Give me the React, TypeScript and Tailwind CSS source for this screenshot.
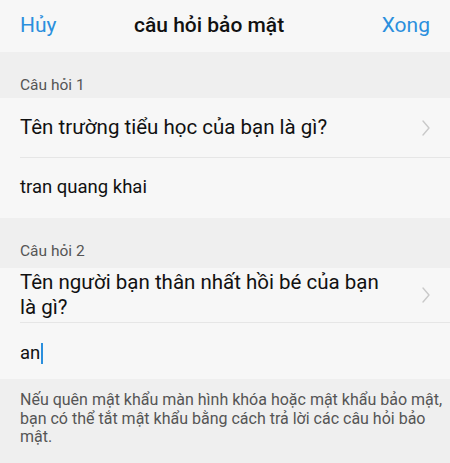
const font = { fontFamily: 'Roboto, "Noto Sans", sans-serif' };

function Chevron() {
  return (
    <svg width="10" height="18" viewBox="0 0 10 18" fill="none" className="shrink-0">
      <path d="M2 2l6 7-6 7" stroke="#c9c9c9" strokeWidth="1.4" strokeLinecap="round" strokeLinejoin="round" />
    </svg>
  );
}

export default function App() {
  return (
    <div className="w-[450px] h-[463px] overflow-hidden bg-[#efefef] text-[#111]" style={font}>
      {/* Header */}
      <div className="h-[52px] bg-[#f7f7f7] flex items-center justify-between px-5">
        <span className="text-[21px] text-[#2b8fdd]">Hủy</span>
        <span className="text-[21px] font-medium text-[#111] mr-[20px]">câu hỏi bảo mật</span>
        <span className="text-[21px] text-[#2b8fdd]">Xong</span>
      </div>

      {/* Question 1 */}
      <div className="h-[46px] flex items-end pb-[1px] px-5 text-[15.5px] text-[#555]">Câu hỏi 1</div>
      <div className="bg-[#f7f7f7]">
        <div className="h-[59px] flex items-center justify-between pl-5 pr-[19px]">
          <span className="text-[20.5px]">Tên trường tiểu học của bạn là gì?</span>
          <Chevron />
        </div>
        <div className="ml-5 h-px bg-[#e6e6e6]" />
        <div className="h-[60px] flex items-center px-5 text-[18.5px]">tran quang khai</div>
      </div>

      {/* Question 2 */}
      <div className="h-[50px] flex items-end pb-[5px] px-5 text-[15.5px] text-[#555]">Câu hỏi 2</div>
      <div className="bg-[#f7f7f7]">
        <div className="h-[54px] flex items-center justify-between pl-5 pr-[19px]">
          <span className="text-[20.5px] leading-[25px] pr-10">Tên người bạn thân nhất hồi bé của bạn là gì?</span>
          <Chevron />
        </div>
        <div className="ml-5 h-px bg-[#e6e6e6]" />
        <div className="h-[56px] flex items-center pt-[5px] px-5 text-[18.5px]">
          an<span className="inline-block w-[2px] h-[21px] bg-[#2b8fdd] ml-[1px]" />
        </div>
      </div>

      {/* Footer */}
      <div className="pl-5 pr-[1px] pt-[12px] text-[16px] leading-[18.5px] text-[#555]">
        Nếu quên mật khẩu màn hình khóa hoặc mật khẩu bảo mật, bạn có thể tắt mật khẩu bằng cách trả lời các câu hỏi bảo mật.
      </div>
    </div>
  );
}
